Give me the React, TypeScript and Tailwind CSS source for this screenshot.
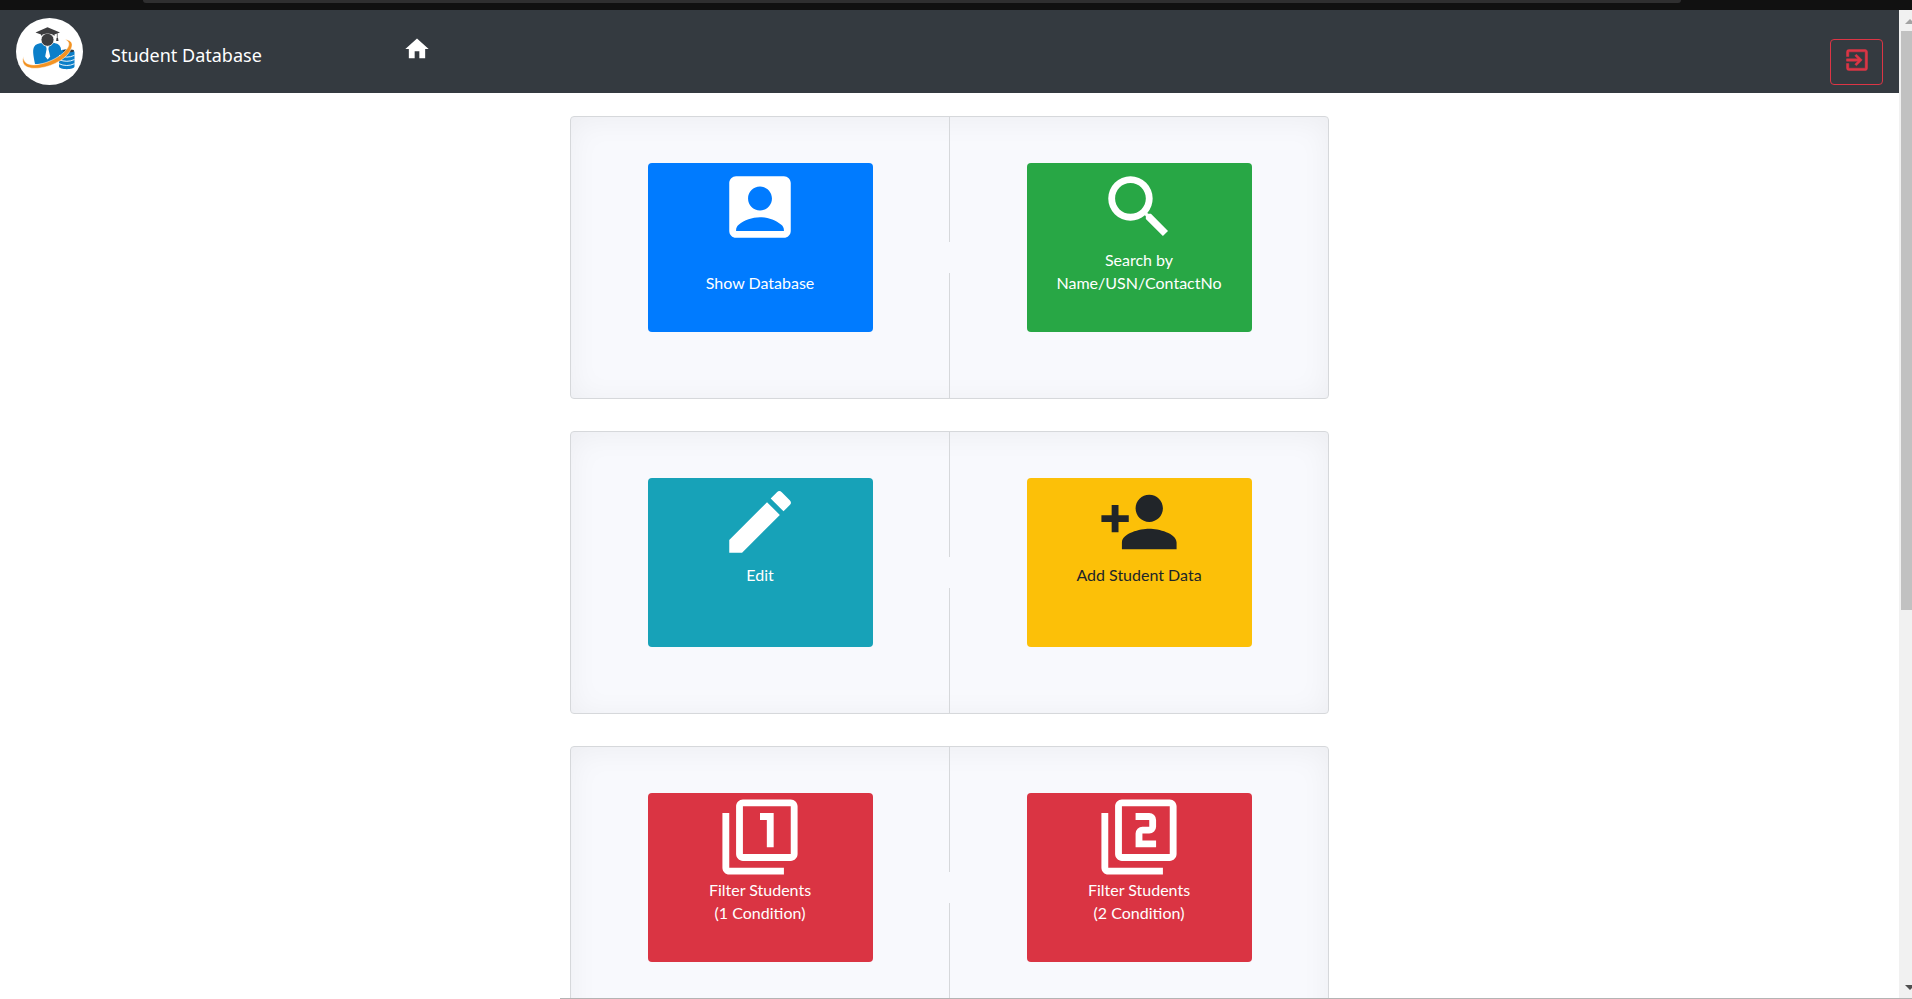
import React from "react";
import type { IconType } from "react-icons";
import {
  MdAccountBox,
  MdEdit,
  MdFilter1,
  MdFilter2,
  MdHome,
  MdPersonAdd,
  MdSearch,
} from "react-icons/md";

type Action = { icon: IconType; lines: string[]; tone: string };

const rows: [Action, Action][] = [
  [
    { icon: MdAccountBox, lines: ["", "Show Database"], tone: "bg-[#007bff] text-white" },
    { icon: MdSearch, lines: ["Search by", "Name/USN/ContactNo"], tone: "bg-[#28a745] text-white" },
  ],
  [
    { icon: MdEdit, lines: ["Edit"], tone: "bg-[#17a2b8] text-white" },
    { icon: MdPersonAdd, lines: ["Add Student Data"], tone: "bg-[#fcc008] text-[#212529]" },
  ],
  [
    { icon: MdFilter1, lines: ["Filter Students", "(1 Condition)"], tone: "bg-[#da3443] text-white" },
    { icon: MdFilter2, lines: ["Filter Students", "(2 Condition)"], tone: "bg-[#da3443] text-white" },
  ],
];

function Logo() {
  return (
    <svg viewBox="0 0 67 67" className="size-[67px] shrink-0" role="img" aria-label="Student Database logo">
      <circle cx="33.5" cy="33.5" r="33.5" fill="#fff" />
      <path d="M19 46C18 40 16 33 18 29C19.500 26 23 25 26.500 25L31.500 29L37 25C41 25 44.500 27 45 31C45.500 35 44 38.500 41 40.500C34 44.500 26 46.500 19 46Z" fill="#0b7fc9" />
      <path d="M30 28h3l-.6 3 1.800 7.500-2.500 3-2.500-3L30.600 31Z" fill="#fff" />
      <circle cx="31.500" cy="21.800" r="6.500" fill="#3d3d3f" stroke="#fff" strokeWidth="0.800" />
      <path d="M19.500 14.500 31.500 9.200 44 14.500 38.500 16.600V18C34.500 14.800 28.500 14.800 25 18V16.600Z" fill="#3d3d3f" />
      <path d="M41.300 15.500V21" stroke="#3d3d3f" strokeWidth="0.700" />
      <path d="M40.600 20h1.400l.5 3h-2.400Z" fill="#3d3d3f" />
      <path d="M43 34C43 30.500 58.500 30.500 58.500 34V48.500C58.500 52 43 52 43 48.500Z" fill="#0b7fc9" />
      <ellipse cx="52.500" cy="32.700" rx="5.500" ry="1.500" fill="#343a40" />
      <path d="M43 37.300q7.800 3.600 15.500 0M43 41.500q7.800 3.600 15.500 0M43 45.700q7.800 3.600 15.500 0" fill="none" stroke="#fff" strokeWidth="0.900" />
      <path d="M7.300 38.500C4.500 48 12 51.500 24 50C38 48 52 40 55.500 30C57.500 24.500 54.500 22 49 21.500C53 23.500 54 26 51.500 30C46 38 34 44.500 22 46.500C12.500 48 7.500 45 7.300 38.500Z" fill="#f39323" stroke="#fff" strokeWidth="0.500" />
    </svg>
  );
}

function ExitIcon() {
  return (
    <svg viewBox="0 0 24 24" className="size-7" fill="currentColor" stroke="currentColor" strokeWidth="0.4" aria-hidden="true">
      <path d="M10.090 15.590 11.500 17l5-5-5-5-1.410 1.410L12.670 11H3v2h9.670l-2.580 2.590zM19 3H5a2 2 0 0 0-2 2v4h2V5h14v14H5v-4H3v4a2 2 0 0 0 2 2h14c1.100 0 2-.9 2-2V5c0-1.100-.9-2-2-2z" />
    </svg>
  );
}

function ActionButton({ icon: Icon, lines, tone }: Action) {
  return (
    <button
      type="button"
      className={"flex h-[169px] w-[225px] flex-col items-center rounded pt-[3px] text-base leading-[23px] " + tone}
    >
      <Icon className="size-[82px]" aria-hidden="true" />
      {lines.map((line, i) => (
        <span key={i} className="block h-[23px]">
          {line}
        </span>
      ))}
    </button>
  );
}

function ActionCard({ actions }: { actions: [Action, Action] }) {
  return (
    <section className="flex rounded border border-[#d6d8db] bg-[#f8f9fd] shadow-[inset_0_3px_30px_rgba(0,0,0,0.05)]">
      <div className="flex h-[281px] flex-1 justify-center pt-[46px]">
        <ActionButton {...actions[0]} />
      </div>
      <div className="flex w-px flex-col justify-between" aria-hidden="true">
        <span className="h-[125px] bg-[#d6d8db]" />
        <span className="h-[125px] bg-[#d6d8db]" />
      </div>
      <div className="flex h-[281px] flex-1 justify-center pt-[46px]">
        <ActionButton {...actions[1]} />
      </div>
    </section>
  );
}

export default function App() {
  return (
    <div className="flex h-screen flex-col overflow-hidden bg-white font-['Lato',sans-serif]">
      <div className="flex h-[10px] shrink-0 justify-center bg-[#111111] pr-[88px]" aria-hidden="true">
        <span className="h-[3px] w-[1538px] rounded-b-full bg-[#2f2f30]" />
      </div>
      <div className="flex min-h-0 flex-1">
        <div className="flex min-w-0 flex-1 flex-col">
          <header className="flex h-[83px] shrink-0 items-start bg-[#343a40] pl-4 pr-4">
            <div className="pt-2">
              <Logo />
            </div>
            <a
              href="#"
              className="ml-7 mt-[30px] w-[292px] font-['Noto_Sans',sans-serif] text-lg leading-[30px] text-white"
            >
              Student Database
            </a>
            <a href="#" aria-label="Home" className="mt-[25px] text-white">
              <MdHome className="size-7" />
            </a>
            <button
              type="button"
              aria-label="Log out"
              className="ml-auto mt-[29px] flex h-[46px] w-[53px] justify-center rounded border border-[#dc3545] pt-[6px] text-[#dc3545]"
            >
              <ExitIcon />
            </button>
          </header>
          <main className="mx-auto flex min-h-0 w-full max-w-[759px] flex-1 flex-col gap-8 overflow-hidden pt-[23px]">
            {rows.map((actions, i) => (
              <ActionCard key={i} actions={actions} />
            ))}
          </main>
        </div>
        <div className="flex w-[13px] shrink-0 flex-col items-end overflow-hidden bg-[#f1f1f1]" aria-hidden="true">
          <svg viewBox="0 0 11 21" className="h-[21px] w-[11px] shrink-0">
            <path d="M4 14 9 9l5 5Z" fill="#a3a3a3" />
          </svg>
          <span className="h-[579px] w-[11px] shrink-0 bg-[#c1c1c1]" />
          <svg viewBox="0 0 11 21" className="mt-auto h-[21px] w-[11px] shrink-0">
            <path d="M4 8h10l-5 5Z" fill="#505050" />
          </svg>
        </div>
      </div>
      <div className="flex h-px shrink-0 justify-end" aria-hidden="true">
        <span className="w-[1352px] bg-[#b4b4b4]" />
      </div>
    </div>
  );
}
